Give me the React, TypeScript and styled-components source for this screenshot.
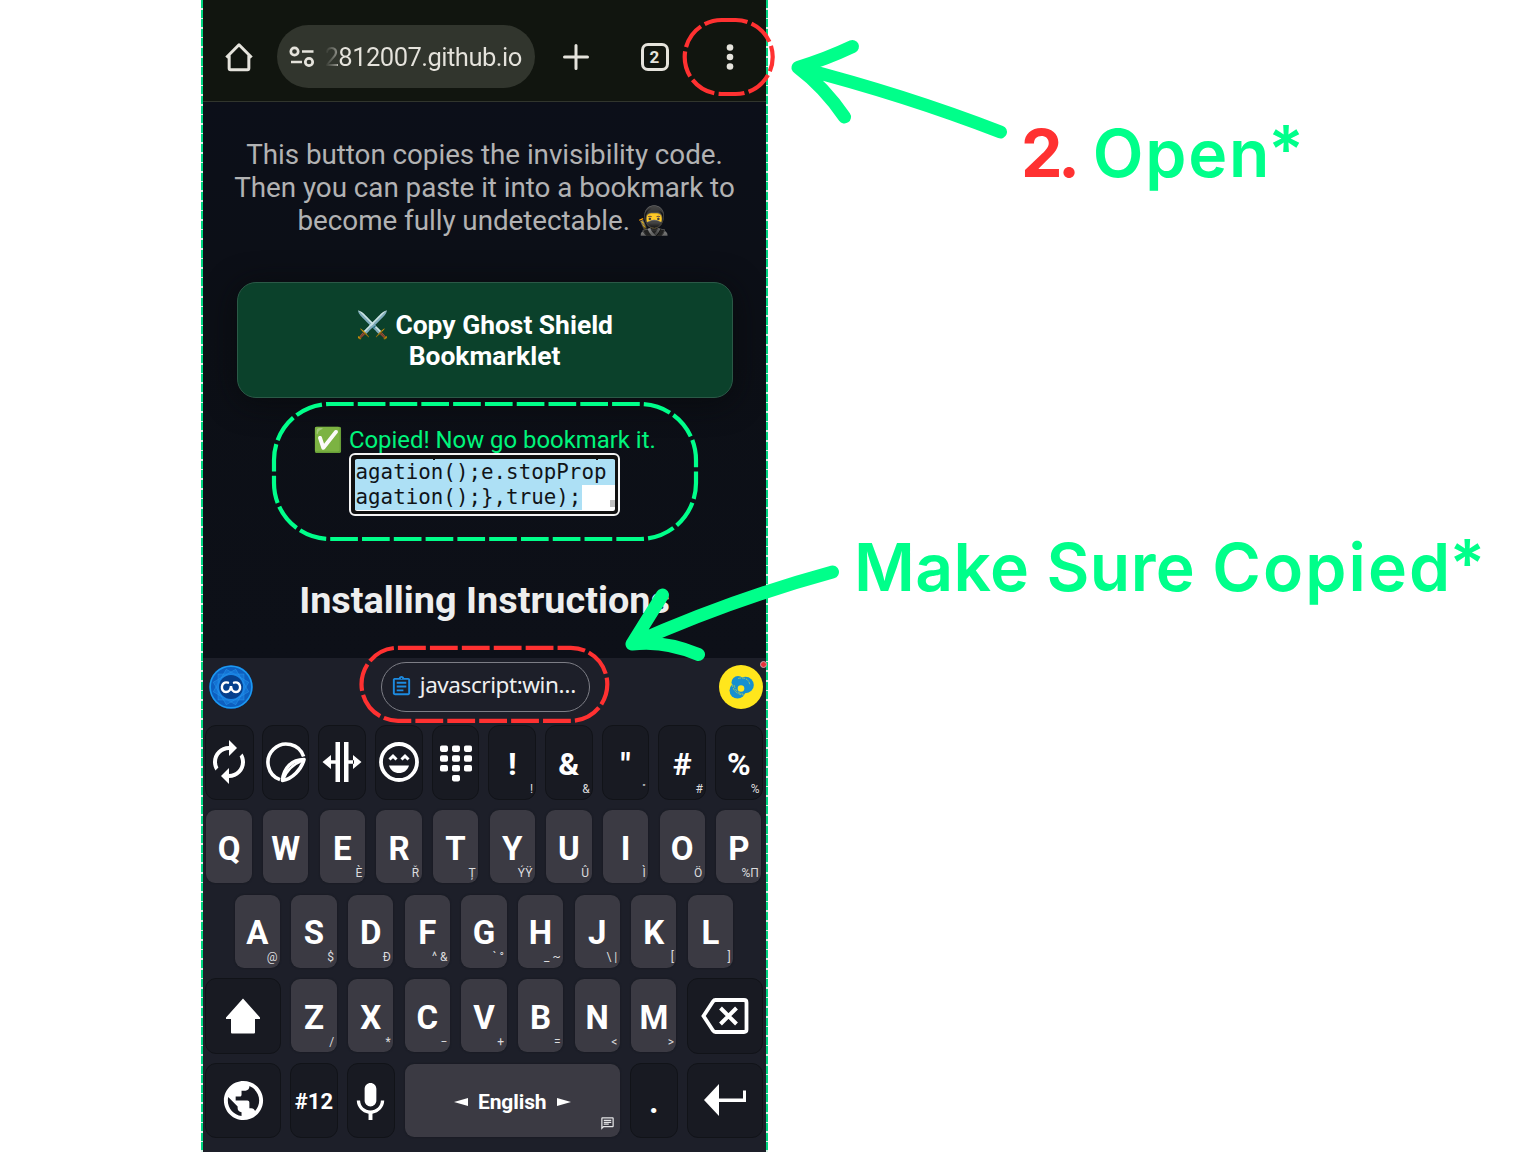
import React from "react";
import styled, { createGlobalStyle } from "styled-components";
import {
  MdAutorenew,
  MdOutlineAssignment,
  MdOutlineChat,
  MdPublic,
  MdKeyboardVoice,
} from "react-icons/md";

const GREEN = "#00ff8a";
const RED = "#ff3131";

const Global = createGlobalStyle`
  * { box-sizing: border-box; }
  body { margin: 0; background: #fff; }
`;

const Page = styled.main`
  position: relative;
  width: 1536px;
  height: 1152px;
  overflow: hidden;
  padding-left: 201px;
  background: #fff;
  font-family: Roboto, "Liberation Sans", sans-serif;
`;

const Phone = styled.section`
  width: 567px;
  height: 1152px;
  display: flex;
  flex-direction: column;
  padding: 0 2px;
  background: repeating-linear-gradient(180deg, #00d581 0 8px, #d8f5e8 8px 9.6px);
`;

const Toolbar = styled.header`
  height: 102px;
  flex: none;
  display: flex;
  align-items: center;
  padding: 12px 32.5px 0 20.5px;
  background: #11150f;
  border-bottom: 1.5px solid #31352d;
  color: #e5e3dc;
  svg { display: block; flex: none; }
`;

const UrlPill = styled.div`
  width: 258px;
  height: 63px;
  margin: 0 27px 0 23px;
  padding: 0 12px;
  border-radius: 32px;
  background: #31352d;
  display: flex;
  align-items: center;
  gap: 10px;
`;

const UrlText = styled.span`
  font-size: 25.6px;
  letter-spacing: -0.55px;
  white-space: nowrap;
  background: linear-gradient(90deg, #31352d 0, #5b5e56 6px, #8b8c85 12px, #e5e3dc 13px);
  background-clip: text;
  color: transparent;
`;

const TabCount = styled.span`
  width: 28px;
  height: 28px;
  margin: 0 57px 0 51px;
  border: 3px solid #e5e3dc;
  border-radius: 7px;
  display: grid;
  place-items: center;
  font-size: 17px;
  font-weight: 700;
`;

const Content = styled.div`
  height: 556px;
  flex: none;
  display: flex;
  flex-direction: column;
  align-items: center;
  background: linear-gradient(#0c0f19, #0c0f16 40%, #0d1018);
`;

const Intro = styled.p`
  margin: 36px 0 0;
  font-size: 27.8px;
  line-height: 33px;
  text-align: center;
  color: #b2b2b3;
  white-space: nowrap;
  letter-spacing: -0.04px;
`;

const Line = styled.span`
  display: block;
`;

const Emoji = styled.span`
  font-family: "Noto Color Emoji", sans-serif;
  letter-spacing: 0;
`;

const CopyButton = styled.button`
  width: 496px;
  height: 116px;
  margin: 45px 0 0;
  padding: 1px 0 0;
  border: 1.5px solid #2b5947;
  border-radius: 19px;
  background: #0b412b;
  box-shadow: 0 4px 30px rgba(8, 10, 12, 0.8);
  color: #fff;
  font: 700 26.4px/31px Roboto, sans-serif;
`;

const Copied = styled.p`
  margin: 27px 0 0;
  font-size: 23.9px;
  line-height: 30px;
  color: #00f57c;
  white-space: nowrap;
`;

const CodeBox = styled.div`
  width: 271px;
  height: 63px;
  margin-top: -2px;
  padding: 3.5px;
  border: 2px solid #f3f3f3;
  border-radius: 6px;
  background: #101010;
`;

const CodeInner = styled.div`
  height: 52px;
  position: relative;
  overflow: hidden;
  padding-top: 1.5px;
  border-radius: 2px;
  background: linear-gradient(#ade0f5 3px, #fff 3px);
  color: #101418;
  font: 20.8px/25px "DejaVu Sans Mono", monospace;
  letter-spacing: 0.03px;
`;

const CodeLine = styled.div<{ $width: string }>`
  width: ${(p) => p.$width};
  height: 25px;
  padding-left: 1px;
  background: #ade0f5;
  white-space: pre;
`;

const Descender = styled.i<{ $x: number }>`
  position: absolute;
  left: ${(p) => p.$x}px;
  top: 0;
  width: 2px;
  height: 1.5px;
  background: #101418;
`;

const Grip = styled.i`
  position: absolute;
  right: 0;
  bottom: 4px;
  width: 5px;
  height: 7px;
  background: #bfbfbf;
`;

const Title = styled.h2`
  margin: 61px 0 0;
  font-size: 37.8px;
  line-height: 46px;
  font-weight: 700;
  color: #eeeeee;
  white-space: nowrap;
`;

const Keyboard = styled.div`
  flex: 1;
  background: #1d1f29;
  color: #fff;
`;

const Suggestions = styled.div`
  height: 62px;
  padding: 0 3px 4px 5.5px;
  display: flex;
  align-items: center;
  justify-content: space-between;
  svg { display: block; flex: none; }
`;

const Clip = styled.div`
  width: 209px;
  height: 50px;
  margin: 0 1px 0 0;
  padding: 0 0 4px 8px;
  border: 1.5px solid #7d7e86;
  border-radius: 25px;
  display: flex;
  align-items: center;
  gap: 7px;
  font: 22.5px/28px "Noto Sans", sans-serif;
  letter-spacing: -0.42px;
  white-space: nowrap;
  color: #efeff0;
  svg { color: #1d8be0; position: relative; top: 1px; }
`;

const Sticker = styled.div`
  position: relative;
  height: 44px;
`;

const Dot = styled.i`
  position: absolute;
  top: -4px;
  right: -3.5px;
  width: 7px;
  height: 7px;
  border-radius: 50%;
  border: 1px solid #c9a6aa;
  background: #e8323c;
`;

const KeyRow = styled.div<{ $inset?: boolean }>`
  height: 84.5px;
  margin: 0 -2px 0 -2.3px;
  padding: 0 ${(p) => (p.$inset ? 28.3 : 0)}px;
  display: flex;
`;

const Cell = styled.div<{ $span: number; $dark?: boolean }>`
  width: ${(p) => p.$span * 56.65}px;
  flex: none;
  padding: ${(p) => (p.$dark ? "4.5px" : "5.7px")};
  display: flex;
`;

const Cap = styled.div<{ $dark?: boolean; $size: number }>`
  position: relative;
  flex: 1;
  display: flex;
  align-items: center;
  justify-content: center;
  border-radius: ${(p) => (p.$dark ? 11 : 9)}px;
  border: ${(p) => (p.$dark ? "1.5px solid #111318" : "0 solid")};
  background: ${(p) => (p.$dark ? "#181a22" : "#3b3a43")};
  box-shadow: ${(p) => (p.$dark ? "none" : "0 0 2px #14161d")};
  font-size: ${(p) => p.$size}px;
  font-weight: 700;
  white-space: nowrap;
  padding-top: ${(p) => (p.$dark ? 0 : 3)}px;
  svg { display: block; flex: none; }
`;

const Glyph = styled.span<{ $dark?: boolean }>`
  margin: ${(p) => (p.$dark ? "3px 0 0" : "0")};
`;

const Hint = styled.span<{ $dark?: boolean }>`
  position: absolute;
  right: ${(p) => (p.$dark ? 2 : 2.5)}px;
  bottom: ${(p) => (p.$dark ? 3 : 3.5)}px;
  font-size: 12px;
  line-height: 14px;
  font-weight: 400;
  color: #dcdcde;
`;

const TinyQuote = styled.span`
  font-size: 8px;
  font-weight: 700;
  vertical-align: 3px;
  margin-right: 1px;
`;

const Language = styled.span`
  display: flex;
  align-items: center;
  gap: 10px;
  font-size: 21px;
  letter-spacing: -0.1px;
`;

const HintIcon = styled.span`
  position: absolute;
  right: 5px;
  bottom: 6px;
  color: #e4e4e6;
`;

const Caption = styled.div<{ $x: number; $y: number; $ls: number }>`
  position: absolute;
  left: ${(p) => p.$x}px;
  top: ${(p) => p.$y}px;
  font: 600 66px/80px Inter, sans-serif;
  letter-spacing: ${(p) => p.$ls}px;
  color: ${GREEN};
  white-space: nowrap;
`;

const Step = styled.span`
  color: ${RED};
  font-weight: 700;
  letter-spacing: -4.5px;
  margin-right: 0;
`;

const Wide = styled.span<{ $ls: number }>`
  letter-spacing: ${(p) => p.$ls}px;
`;

const Star = styled.span`
  position: relative;
  top: -4px;
  margin-left: -3px;
`;

const Marks = styled.svg`
  position: absolute;
  inset: 0;
  fill: none;
`;

const StickerIcon = () => (
  <svg width="42" height="42" viewBox="0 0 42 42" fill="none" stroke="#fff" strokeWidth="3.6">
    <path d="M15 38.6A18.3 18.3 0 1 1 38.6 15.5" />
    <path d="M39 18.500C27 18.500 18.500 27 17.500 39.500C27 38 36.500 28.500 39 18.500Z" strokeLinejoin="round" />
    <path d="M18 39C21 31 28 23 38 19.500" strokeWidth="2.400" />
  </svg>
);

const LoopIcon = styled(MdAutorenew)`
  margin-left: -1px;
`;

const MicIcon = styled(MdKeyboardVoice)`
  margin-left: -1px;
`;

const SplitIcon = () => (
  <svg width="40" height="42" viewBox="0 0 40 42" fill="#fff">
    <path d="M13.500 1h4.500v40h-4.500zM22 1h4.500v40H22zM9 14v14l-8.500-7zM31 14v14l8.500-7zM8 19.200h6v3.600H8zM26 19.200h6v3.600h-6z" />
  </svg>
);

const SmileIcon = () => (
  <svg width="42" height="42" viewBox="0 0 42 42" fill="none" stroke="#fff">
    <circle cx="21" cy="21" r="18" strokeWidth="3.800" />
    <path d="M11.500 18.500 15 15 18.500 18.500M23.500 18.500 27 15 30.500 18.500" strokeWidth="3" />
    <path d="M11 24.500H31C29.500 29.500 25.500 32 21 32S12.500 29.500 11 24.500Z" fill="#fff" stroke="none" />
  </svg>
);

const PadIcon = () => (
  <svg width="34" height="40" viewBox="0 -2 34 40" fill="#fff">
    {[0, 1, 2].map((r) =>
      [0, 1, 2].map((c) => <rect key={`${r}${c}`} x={1 + c * 12} y={1.5 + r * 9.8} width="8" height="6.400" rx="1.800" />)
    )}
    <rect x="13" y="31" width="8" height="6.400" rx="1.800" />
  </svg>
);

const ShiftIcon = () => (
  <svg width="36" height="38" viewBox="0 0 36 38" fill="#fff">
    <path d="M18 1.500 35 20.500V22H30V35.500Q30 36.500 29 36.500H7Q6 36.500 6 35.500V22H1V20.500Z" />
  </svg>
);

const BackspaceIcon = () => (
  <svg width="48" height="38" viewBox="0 0 48 38" fill="none" stroke="#fff" strokeWidth="3.800">
    <path d="M14.500 3H43Q45.500 3 45.500 5.500V32.500Q45.500 35 43 35H14.500Q13 35 12 33.500L2.500 19 12 4.500Q13 3 14.500 3Z" />
    <path d="M19.500 11 35.500 27M35.500 11 19.500 27" strokeWidth="4" />
  </svg>
);

const EnterIcon = () => (
  <svg width="44" height="34" viewBox="0 0 44 34" fill="#fff">
    <path d="M1 17 16 1V15.500H40V7.500H43V19H16V33Z" />
  </svg>
);

const HomeIcon = () => (
  <svg width="30" height="30" viewBox="0 0 32 32" fill="none" stroke="#e5e3dc" strokeWidth="3.200" strokeLinejoin="round">
    <path d="M2.500 16.500 16 3 29.500 16.500M5.500 14.500V28Q5.500 29.500 7 29.500H25Q26.500 29.500 26.500 28V14.500" />
  </svg>
);

const TuneIcon = () => (
  <svg width="26" height="22" viewBox="0 0 26 22" fill="none" stroke="#e5e3dc" strokeWidth="2.700">
    <circle cx="5.500" cy="5.500" r="3.700" />
    <circle cx="20" cy="16" r="3.700" />
    <path d="M13 5.500H24.500M2 16H13" />
  </svg>
);

const BlueBadge = () => (
  <svg width="44" height="44" viewBox="0 0 44 44">
    <circle cx="22" cy="22" r="21.800" fill="#0d5fc0" />
    <circle cx="22" cy="22" r="20.800" fill="none" stroke="#1d9af0" strokeWidth="1.500" />
    <g fill="#1a86e8" fillOpacity=".5" stroke="#38aef5" strokeOpacity=".6" strokeWidth=".5">
      {[0, 30, 60].map((a) => (
        <rect key={a} x="9" y="9" width="26" height="26" transform={`rotate(${a} 22 22)`} />
      ))}
    </g>
    <circle cx="22" cy="22" r="12" fill="#06408d" />
    <path
      d="M19 17.700C11.500 15.500 11 27 17 27Q21.500 27 22 21Q22.500 27 27 27C33 27 32.500 15.500 25 17.700"
      fill="none" stroke="#fff" strokeWidth="2.400" strokeLinecap="round"
    />
  </svg>
);

const YellowBadge = () => (
  <svg width="44" height="44" viewBox="0 0 44 44">
    <circle cx="22" cy="22" r="22" fill="#ffe61c" />
    <g fill="#1690d0">
      <circle cx="19" cy="17.500" r="6.500" />
      <circle cx="26.500" cy="20" r="8.300" />
      <circle cx="18.500" cy="25.500" r="8" />
    </g>
    <g fill="none" stroke="#e9df2c" strokeWidth=".6">
      <path d="M13 19Q15 30 26 30M19 13.500Q29 11 31 20M15 20Q17 28 24 29" strokeDasharray="3 1" />
    </g>
    <circle cx="22" cy="23.500" r="3.300" fill="#ffe61c" />
  </svg>
);

type KeyDef = {
  label: React.ReactNode;
  hint?: React.ReactNode;
  dark?: boolean;
  span?: number;
  size?: number;
};

const Key = ({ label, hint, dark, span = 1, size = 33 }: KeyDef) => (
  <Cell $span={span} $dark={dark}>
    <Cap $dark={dark} $size={size}>
      {typeof label === "string" ? <Glyph $dark={dark}>{label}</Glyph> : label}
      {hint && <Hint $dark={dark}>{hint}</Hint>}
    </Cap>
  </Cell>
);

const letters = (s: string, hints: string[]): KeyDef[] => s.split("").map((label, i) => ({ label, hint: hints[i] }));

const topKeys: KeyDef[] = [
  { label: <LoopIcon size={48} />, dark: true },
  { label: <StickerIcon />, dark: true },
  { label: <SplitIcon />, dark: true },
  { label: <SmileIcon />, dark: true },
  { label: <PadIcon />, dark: true },
  ...["!", "&", '"', "#", "%"].map((label) => ({
    label,
    hint: label === '"' ? <TinyQuote>"</TinyQuote> : label,
    dark: true,
    size: 32,
  })),
];

const rows: { keys: KeyDef[]; inset?: boolean }[] = [
  { keys: topKeys },
  { keys: letters("QWERTYUIOP", ["", "", "È", "Ř", "Ț", "ÝŸ", "Û", "Ì", "Ö", "%Π"]) },
  { keys: letters("ASDFGHJKL", ["@", "$", "Đ", "^ &", "` °", "_ ~", "\\ |", "[", "]"]), inset: true },
  {
    keys: [
      { label: <ShiftIcon />, dark: true, span: 1.5 },
      ...letters("ZXCVBNM", ["/", "*", "−", "+", "=", "<", ">"]),
      { label: <BackspaceIcon />, dark: true, span: 1.5 },
    ],
  },
];

export default function App() {
  return (
    <Page>
      <Global />
      <Phone>
        <Toolbar>
          <HomeIcon />
          <UrlPill>
            <TuneIcon />
            <UrlText>2812007.github.io</UrlText>
          </UrlPill>
          <svg width="28" height="28" viewBox="0 0 28 28" stroke="#e5e3dc" strokeWidth="3" strokeLinecap="round">
            <path d="M14 2.500V25.500M2.500 14H25.500" />
          </svg>
          <TabCount>2</TabCount>
          <svg width="8" height="28" viewBox="0 0 8 28" fill="#e5e3dc">
            <circle cx="4" cy="4.500" r="3.300" />
            <circle cx="4" cy="14" r="3.300" />
            <circle cx="4" cy="23.500" r="3.300" />
          </svg>
        </Toolbar>
        <Content>
          <Intro>
            <Line>This button copies the invisibility code.</Line>
            <Line>Then you can paste it into a bookmark to</Line>
            <Line>
              become fully undetectable. <Emoji>🥷</Emoji>
            </Line>
          </Intro>
          <CopyButton>
            <Line>
              <Emoji>⚔️</Emoji> Copy Ghost Shield
            </Line>
            <Line>Bookmarklet</Line>
          </CopyButton>
          <Copied>
            <Emoji>✅</Emoji> Copied! Now go bookmark it.
          </Copied>
          <CodeBox>
            <CodeInner>
              <CodeLine $width="100%">agation();e.stopProp</CodeLine>
              <CodeLine $width="227px">{"agation();},true);"}</CodeLine>
              <Descender $x={78} />
              <Descender $x={241} />
              <Grip />
            </CodeInner>
          </CodeBox>
          <Title>Installing Instructions</Title>
        </Content>
        <Keyboard>
          <Suggestions>
            <BlueBadge />
            <Clip>
              <MdOutlineAssignment size={23} />
              javascript:win…
            </Clip>
            <Sticker>
              <YellowBadge />
              <Dot />
            </Sticker>
          </Suggestions>
          {rows.map((row, i) => (
            <KeyRow key={i} $inset={row.inset}>
              {row.keys.map((k, j) => (
                <Key key={j} {...k} />
              ))}
            </KeyRow>
          ))}
          <KeyRow>
            <Key label={<MdPublic size={47} />} dark span={1.5} />
            <Key label="#12" dark size={22} />
            <Key label={<MicIcon size={47} />} dark />
            <Cell $span={4}>
              <Cap $size={21}>
                <Language>
                  <svg width="14" height="8" viewBox="0 0 14 8" fill="#fff"><path d="M0 4 14 0V8Z" /></svg>
                  English
                  <svg width="14" height="8" viewBox="0 0 14 8" fill="#fff"><path d="M14 4 0 0V8Z" /></svg>
                </Language>
                <HintIcon><MdOutlineChat size={15} /></HintIcon>
              </Cap>
            </Cell>
            <Key label="." dark size={33} />
            <Key label={<EnterIcon />} dark span={1.5} />
          </KeyRow>
        </Keyboard>
      </Phone>
      <Marks width="1536" height="1152" viewBox="0 0 1536 1152">
        <g stroke={RED} strokeWidth="4.200">
          <rect x="684.700" y="20" width="88" height="74" rx="37" strokeDasharray="26 4.300" />
          <rect x="361.500" y="647.800" width="245.800" height="73" rx="36.500" pathLength="568" strokeDasharray="27.500 4.050" />
        </g>
        <rect x="274" y="404" width="422" height="135" rx="56" stroke={GREEN} strokeWidth="4.200" pathLength="1010.240" strokeDasharray="27.500 4.070" strokeDashoffset="4" />
        <g stroke={GREEN} strokeWidth="13" strokeLinecap="round" strokeLinejoin="round">
          <path d="M852.500 46.500Q826 59 798 67.500Q824 87 844.500 117M798 67.500Q905 95 1000.500 132" />
          <path d="M662.500 595 632 644Q665 640 698.500 654.500M632 644Q730 600 832.500 572" />
        </g>
      </Marks>
      <Caption $x={1021} $y={113} $ls={0.4}>
        <Step>2.</Step> <Wide $ls={1.8}>Open</Wide>
        <Star>*</Star>
      </Caption>
      <Caption $x={854} $y={527} $ls={0.4}>
        Make Sure <Wide $ls={2.1}>Copied</Wide>
        <Star>*</Star>
      </Caption>
    </Page>
  );
}
